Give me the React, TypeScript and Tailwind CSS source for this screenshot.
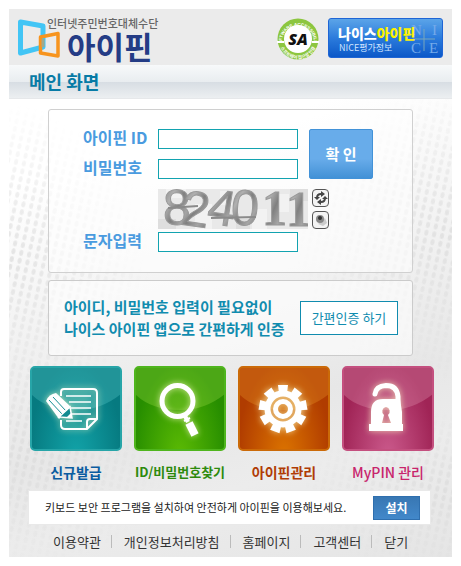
import React from 'react';

const font = "font-['Noto_Sans_CJK_KR',sans-serif]";

const menus = [
    { label: "신규발급", size: "text-[14px] font-bold text-[#0a5ca0]", tile: "border-[#27a5a8] bg-[radial-gradient(ellipse_at_50%_110%,#12a3a8,#067a80_75%)]", gloss: "#5fd0cf", icon: <PaperIcon /> },
    { label: "ID/비밀번호찾기", size: "text-[13px] font-bold text-[#2d8a0c]", tile: "border-[#4fb51d] bg-[radial-gradient(ellipse_at_50%_110%,#5cbb04,#278e00_75%)]", gloss: "#a2e04a", icon: <MagnifierIcon /> },
    { label: "아이핀관리", size: "text-[14px] font-bold text-[#b03c05]", tile: "border-[#cb6a08] bg-[radial-gradient(ellipse_at_50%_110%,#dc7400,#b03c00_75%)]", gloss: "#eda02c", icon: <GearIcon /> },
    { label: "MyPIN 관리", size: "text-[14px] font-medium text-[#c8246c]", tile: "border-[#c4507f] bg-[radial-gradient(ellipse_at_50%_110%,#cb5a8c,#a02456_75%)]", gloss: "#e8a0b8", icon: <LockIcon /> },
];

const footerLinks = ["이용약관", "개인정보처리방침", "홈페이지", "고객센터", "닫기"];

function PaperIcon() {
    return (
        <g fill="none" stroke="#fff" strokeWidth="2">
            <path d="M31 30v-4q0-3 3-3h29q4 0 4 4v26l-10 10H35q-4 0-4-4v-5" />
            <path d="M57 63v-7q0-3 3-3h7" />
            <path d="M36 30h25M39 36h22M41 42h20M41 48h20M36 55h16" strokeWidth="1.5" />
            <path d="M16 35q3-7 10-8l15 14-12 12z" fill="#fff" stroke="none" />
            <path d="M19 34l13 14M23 31l13 14" stroke="#178f95" strokeWidth="1" />
            <path d="M29 51l11-10 2 11z" fill="#138b91" strokeWidth="1.5" />
            <path d="M42 52l-5-1 4-4z" fill="#fff" stroke="none" />
        </g>
    );
}

function MagnifierIcon() {
    return (
        <g fill="none" stroke="#fff">
            <circle cx="43.500" cy="35" r="15.500" strokeWidth="5" />
            <path d="M51 50l3 6" strokeWidth="4" />
            <path d="M50 55l6-3" strokeWidth="2" />
            <path d="M55 57l6 12" strokeWidth="8" />
        </g>
    );
}

function GearIcon() {
    const teeth = [0, 40, 80, 120, 160, 200, 240, 280, 320];
    return (
        <g fill="none" stroke="#fff">
            <circle cx="45" cy="43" r="15.500" strokeWidth="6" />
            <circle cx="45" cy="43" r="7.500" strokeWidth="5" />
            {teeth.map((angle) => (
                <path key={angle} d="M41 27l-1-8h10l-1 8z" fill="#fff" stroke="none" transform={`rotate(${angle} 45 43)`} />
            ))}
        </g>
    );
}

function LockIcon() {
    return (
        <g>
            <path d="M33 28q1-8 11-8.500 11 0 12 11v12" fill="none" stroke="#fff" strokeWidth="5" strokeLinecap="round" />
            <path fillRule="evenodd" d="M29 58V46q0-13 12-13h17l2 13v12h1v7H27v-7zM44 41a4.500 4.500 0 0 0-2 8l-2 8h9l-3-8a4.500 4.500 0 0 0-2-8z" fill="#fff" />
        </g>
    );
}

function Logo() {
    return (
        <svg viewBox="0 0 44 40" className="h-10 w-11 shrink-0" fill="none" strokeLinejoin="round">
            <path d="M3.500 4L26 8v21L3.500 35z" stroke="#42c5f5" strokeWidth="5" />
            <path d="M23.500 19L41 15.500V38l-17.500-3z" stroke="#f7941e" strokeWidth="3.500" />
            <path d="M26 21v8" stroke="#a3a98a" strokeWidth="3" />
        </svg>
    );
}

function AccessBadge() {
    return (
        <svg viewBox="0 0 42 42" className="h-[42px] w-[42px] shrink-0" role="img" aria-label="Software Accessibility">
            <defs>
                <path id="badge-top" d="M5 24a16 16 0 1 1 32 0" />
                <path id="badge-bottom" d="M2 22a19 19 0 0 0 38 0" />
            </defs>
            <circle cx="21" cy="21" r="20.500" fill="#8cc63f" />
            <circle cx="21" cy="21" r="14" fill="#fff" />
            <path d="M0 24h7M35 24h7" stroke="#fff" strokeWidth="2" />
            <g fill="#fff" fontSize="4.500" fontWeight="700" textAnchor="middle">
                <text fontFamily="Liberation Sans"><textPath href="#badge-top" startOffset="50%">SOFTWARE ACCESSIBILITY</textPath></text>
                <text fontFamily="Noto Sans CJK KR"><textPath href="#badge-bottom" startOffset="50%">소프트웨어 접근성 인증</textPath></text>
            </g>
            <text x="21" y="27" textAnchor="middle" fontFamily="Open Sans, sans-serif" fontWeight="800" fontStyle="italic" fontSize="16" fill="#111">SA</text>
        </svg>
    );
}

function NiceBanner() {
    return (
        <a href="#nice" className="relative block h-10 w-[115px] shrink-0 overflow-hidden rounded-[3px] border border-[#1f65d5] bg-linear-to-b from-[#5ba4e8] via-[#2b7bdc] to-[#0b58c8] text-white">
            <svg viewBox="0 0 113 38" className="absolute inset-0 h-full w-full" fontFamily="Liberation Serif" fontSize="15" fill="#74aaea">
                <text x="82" y="16">N</text>
                <text x="103" y="16">I</text>
                <text x="82" y="34">C</text>
                <text x="100" y="34">E</text>
                <path d="M95 10v22M84 20h22" stroke="#78a6bb" strokeWidth="1" />
            </svg>
            <span className="relative block pt-[5px] pl-[9px] text-[14px] leading-[18px] font-black whitespace-nowrap">
                나이스<span className="text-[#fff200]">아이핀</span>
            </span>
            <span className="relative block pl-[10px] text-[9px] leading-[12px] text-[#cfe5ff]">NICE평가정보</span>
        </a>
    );
}

function Captcha() {
    return (
        <svg viewBox="0 0 150 40" className="h-10 w-[150px]" role="img" aria-label="824011">
            <defs>
                <linearGradient id="ink" x1="0" y1="0" x2="1" y2="1">
                    <stop offset="0" stopColor="#777" />
                    <stop offset=".3" stopColor="#b0b0b0" />
                    <stop offset=".5" stopColor="#808080" />
                    <stop offset=".7" stopColor="#a5a5a5" />
                    <stop offset="1" stopColor="#666" />
                </linearGradient>
            </defs>
            <rect width="150" height="40" fill="#e9e9e9" />
            <path d="M8 0h20v9H8zM37 15h17v25H37zM62 2h12v14H62zM94 20h15v20H94zM119 5h12v18h-12z" fill="#f2f2f2" />
            <path d="M0 30h18v10H0zM78 30h14v10H78zM132 0h18v12h-18z" fill="#dedede" />
            <g fill="url(#ink)" stroke="#999" strokeWidth="1" fontFamily="Liberation Sans" fontSize="50">
                <text x="5" y="36">8</text>
                <text x="24" y="37" transform="rotate(8 36 20)">2</text>
                <text x="50" y="36" transform="rotate(9 65 20)">4</text>
                <text x="73" y="36" transform="rotate(4 86 20)">0</text>
                <g fontFamily="Liberation Serif" fontWeight="700">
                    <text x="104" y="36">1</text>
                    <text x="128" y="37">1</text>
                </g>
            </g>
            <path d="M10 19l30-2M53 29l45-1" stroke="#8a8a8a" strokeWidth="2" />
        </svg>
    );
}

const Field = ({ id, label, type = "text" }: { id: string; label: string; type?: string }) => (
    <div className="flex h-5 items-center">
        <label htmlFor={id} className="w-[75px] pb-1 text-[16px] leading-5 font-bold whitespace-nowrap text-[#4a9bdf]">{label}</label>
        <input id={id} type={type} className="h-5 w-[140px] border border-[#12a3b0] bg-white px-1 text-xs outline-none" />
    </div>
);

function Dots() {
    return (
        <svg className="absolute inset-0 h-full w-full" aria-hidden="true">
            <defs>
                <pattern id="dots" width="8" height="8" patternUnits="userSpaceOnUse" patternTransform="rotate(12)">
                    <ellipse cx="4" cy="4" rx="2" ry="3" fill="#dadada" />
                </pattern>
                <radialGradient id="dot-fade">
                    <stop offset="0" stopColor="#fff" stopOpacity=".7" />
                    <stop offset="1" stopColor="#fff" stopOpacity="0" />
                </radialGradient>
                <mask id="dot-mask">
                    <ellipse cx="0" cy="35%" rx="32%" ry="34%" fill="url(#dot-fade)" />
                    <ellipse cx="100%" cy="30%" rx="36%" ry="32%" fill="url(#dot-fade)" />
                    <ellipse cx="4%" cy="78%" rx="32%" ry="24%" fill="url(#dot-fade)" />
                    <ellipse cx="100%" cy="86%" rx="34%" ry="18%" fill="url(#dot-fade)" />
                </mask>
            </defs>
            <rect width="100%" height="100%" fill="url(#dots)" mask="url(#dot-mask)" />
        </svg>
    );
}

export default function App() {
    return (
        <div className={`bg-white p-[9px] ${font}`}>
            <header className="flex h-14 items-start justify-between bg-[#ebebeb] pt-[9px] pr-[9px] pl-2">
                <div className="flex">
                    <Logo />
                    <h1 className="-ml-4 text-[#243c85]">
                        <span className="block pl-[2px] text-[11px] leading-[10px] font-medium whitespace-nowrap text-[#666]">인터넷주민번호대체수단</span>
                        <span className="block pt-[2px] pl-[22px] text-[31px] leading-[32px] font-bold">아이핀</span>
                    </h1>
                </div>
                <div className="flex gap-[9px]">
                    <AccessBadge />
                    <NiceBanner />
                </div>
            </header>

            <h2 className="h-[34px] border-b border-[#e6e8ea] bg-[linear-gradient(#f7f9fa,#e9edf0_50%,#d7dde3_51%,#eceff1)] pl-5 text-[18px] leading-8 font-bold text-[#087ba6]">
                메인 화면
            </h2>

            <main className="relative bg-[linear-gradient(165deg,#fff_15%,#e7e7e7_65%,#ececec_78%,#e5e5e5)] pt-[10px]">
                <Dots />
                <div className="relative">
                    <form className="mx-[39px] rounded-[3px] border border-[#d0d0d0] bg-white/60 pt-[19px] pb-5 pl-[34px]" onSubmit={(e) => e.preventDefault()}>
                        <div className="flex gap-[11px]">
                            <div className="flex flex-col gap-[10px]">
                                <Field id="pin-id" label="아이핀 ID" />
                                <Field id="pin-pw" label="비밀번호" type="password" />
                            </div>
                            <button type="submit" className="h-[50px] w-16 rounded-[2px] border border-[#4292d8] bg-linear-to-b from-[#68acea] from-60% to-[#4291d6] text-[15px] font-bold text-white">확 인</button>
                        </div>
                        <div className="mt-[10px] mb-[3px] flex gap-1 pl-[75px]">
                            <Captcha />
                            <div className="flex flex-col justify-between">
                                <button type="button" aria-label="새로고침" className="flex h-[18px] w-[17px] items-center justify-center rounded-[4px] border border-[#555] bg-[#f4f4f4]">
                                    <svg viewBox="0 0 14 14" className="h-[14px] w-[14px]" fill="none" stroke="#444" strokeWidth="2">
                                        <path d="M3 7q0-4 4-4M11 7q0 4-4 4" />
                                        <path d="M7 0l4 3-4 3zM7 8l-4 3 4 3zM0 6h6L3 9zM8 8h6l-3-3z" fill="#444" stroke="none" />
                                    </svg>
                                </button>
                                <button type="button" aria-label="음성듣기" className="flex h-[18px] w-[17px] items-center justify-center rounded-[4px] border border-[#555] bg-[#f4f4f4]">
                                    <svg viewBox="0 0 14 14" className="h-[14px] w-[14px]">
                                        <path d="M4 11l7-6 2 5-4 3z" fill="#ccc" />
                                        <circle cx="6" cy="6" r="4" fill="#888" />
                                        <circle cx="6" cy="5" r="2" fill="#333" />
                                    </svg>
                                </button>
                            </div>
                        </div>
                        <Field id="captcha-text" label="문자입력" />
                    </form>

                    <section className="mx-[39px] mt-[7px] flex h-[76px] items-center justify-between rounded-[3px] border border-[#cbcbcb] bg-white/60 pr-[14px] pl-[15px]">
                        <p className="text-[15px] leading-[22px] font-bold whitespace-nowrap text-[#118caf]">
                            아이디, 비밀번호 입력이 필요없이<br />나이스 아이핀 앱으로 간편하게 인증
                        </p>
                        <button type="button" className="h-[34px] w-[98px] shrink-0 border border-[#118caf] bg-white text-[13px] whitespace-nowrap text-[#118caf]">간편인증 하기</button>
                    </section>

                    <nav className="mt-[10px] grid grid-cols-4 gap-3 pr-[18px] pl-[21px]">
                        {menus.map((menu) => (
                            <a key={menu.label} href="#menu" className="flex flex-col items-center">
                                <span className={`h-[85px] w-full overflow-hidden rounded-[5px] border-2 ${menu.tile}`}>
                                    <svg viewBox="2 2 88 81" className="h-full w-full">
                                        <path d="M0 0h92v27Q72 44 46 44 16 44 0 27z" fill={menu.gloss} opacity=".3" />
                                        <g className="[filter:drop-shadow(0_0_3px_rgba(255,255,200,0.7))]">{menu.icon}</g>
                                    </svg>
                                </span>
                                <span className={`mt-[11px] leading-5 whitespace-nowrap ${menu.size}`}>{menu.label}</span>
                            </a>
                        ))}
                    </nav>

                    <div className="mt-2 mr-[21px] ml-[19px] flex h-[35px] items-center justify-between border border-[#e9e9e9] bg-white pr-[10px] pl-4">
                        <p className="text-[11px] whitespace-nowrap text-[#222]">키보드 보안 프로그램을 설치하여 안전하게 아이핀을 이용해보세요.</p>
                        <button type="button" className="h-6 w-[47px] shrink-0 border border-[#2f6fae] bg-linear-to-b from-[#3877b3] to-[#4288ca] text-[12px] font-bold text-white">설치</button>
                    </div>

                    <footer className="flex h-8 items-center pl-11">
                        {footerLinks.map((link, index) => (
                            <a key={link} href="#footer" className={`text-[13px] leading-[13px] whitespace-nowrap text-[#333] ${index > 0 ? 'ml-[10px] border-l border-[#bbb] pl-3' : ''}`}>{link}</a>
                        ))}
                    </footer>
                </div>
            </main>
        </div>
    );
}
